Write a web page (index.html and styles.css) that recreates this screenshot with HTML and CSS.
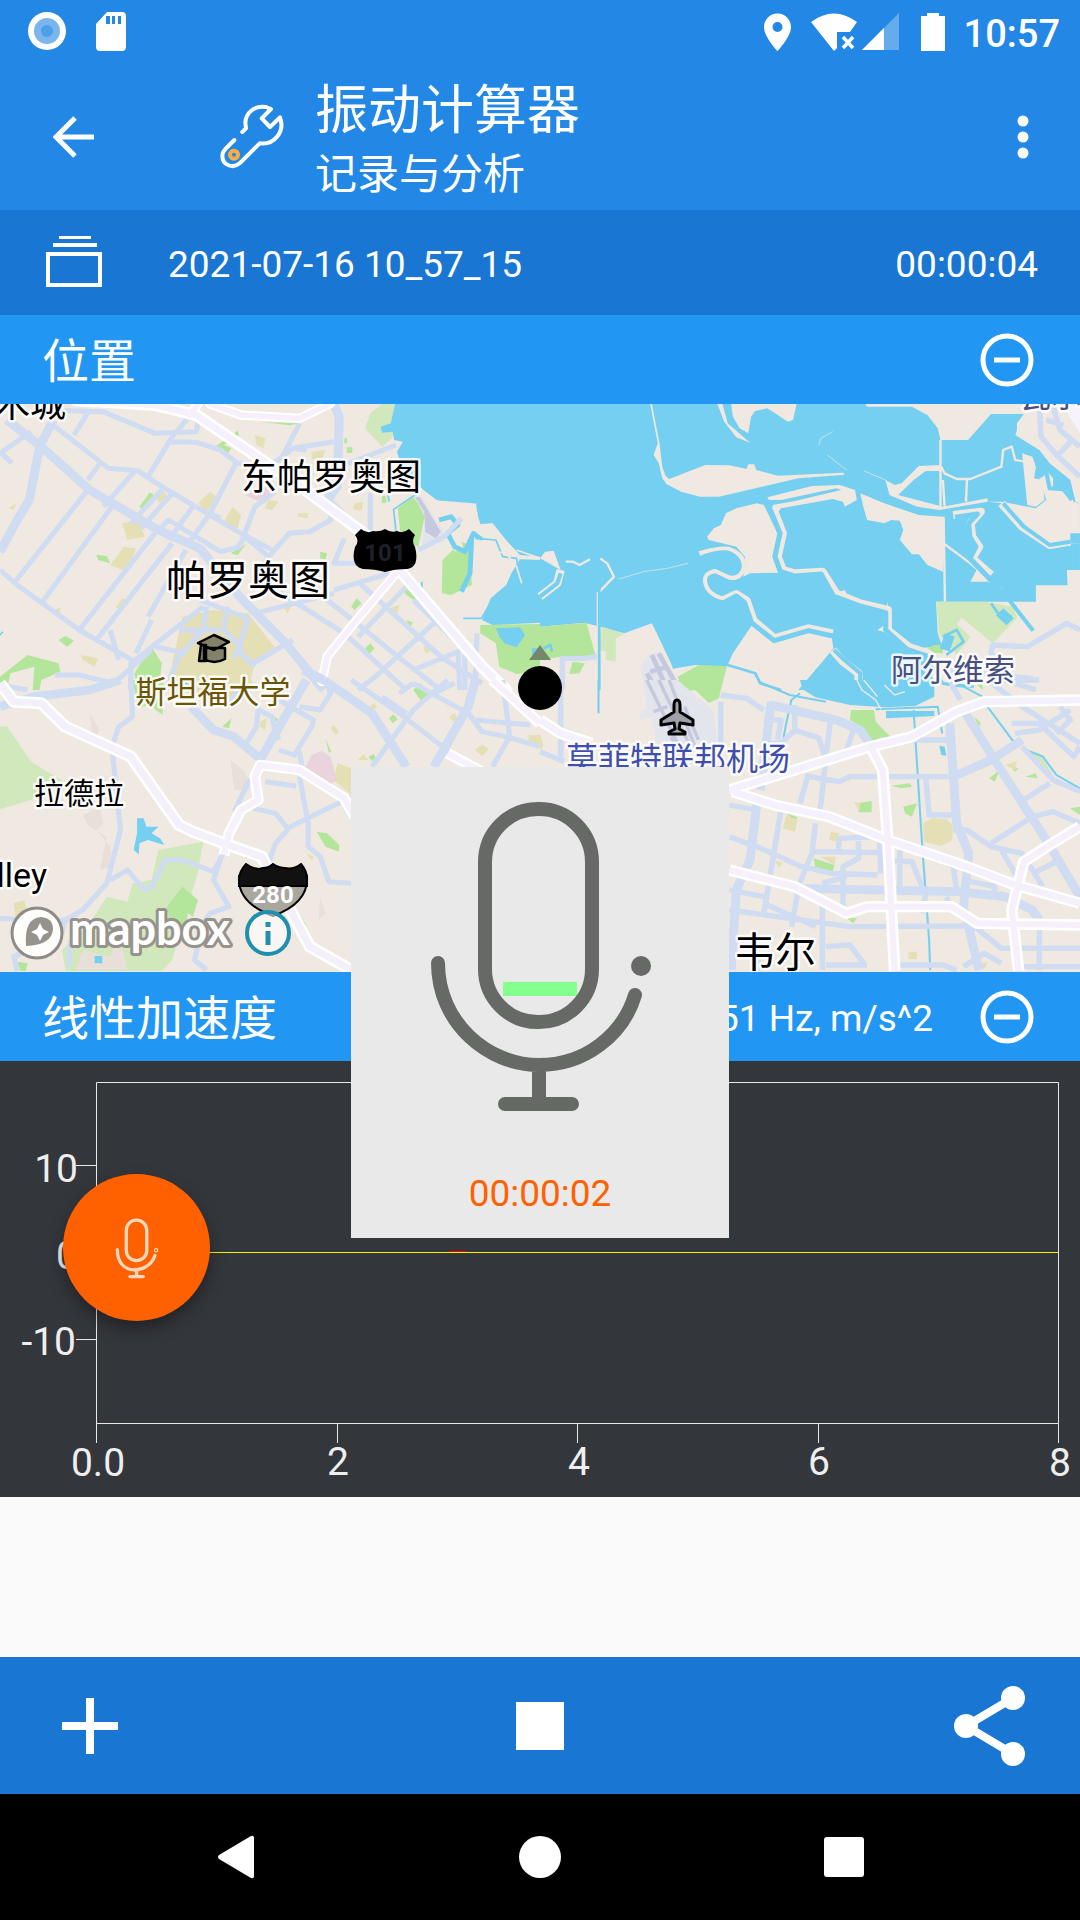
FILE: index.html
```html
<!DOCTYPE html>
<html lang="zh-CN">
<head>
<meta charset="utf-8">
<meta name="viewport" content="width=device-width, initial-scale=1">
<title>振动计算器</title>
<link rel="stylesheet" href="styles.css">
</head>
<body>
<div class="app">
  <div class="status">
    <svg class="status-left" viewBox="0 0 104 40" aria-hidden="true">
      <circle cx="19" cy="20" r="19" fill="#fff"/><circle cx="19" cy="20" r="13" fill="#7ab5ee"/><circle cx="19" cy="20" r="6" fill="#4c9fe9"/>
      <path fill="#fff" fill-rule="evenodd" d="M79 1h15q4 0 4 4v31q0 4-4 4H72q-4 0-4-4V13zM78 5v8h4V5zm6 0v8h3V5zm6 0v8h3V5z"/>
    </svg>
    <div class="status-right">
      <svg class="status-icons" viewBox="0 0 182 40" aria-hidden="true">
        <path fill="#fff" fill-rule="evenodd" d="M13.500 2.500C6 2.500 0 8.500 0 16c0 10 13.500 24 13.500 24S27 26 27 16C27 8.500 21 2.500 13.500 2.500zm0 8.500a5 5 0 1 1 0 10 5 5 0 0 1 0-10z"/>
        <path fill="#fff" d="M47 11q23-17 46 0l-7 10H73v16l-3 3z"/>
        <path d="m79 26 10 11m0-11L79 37" stroke="#fff" stroke-width="3.500"/>
        <path fill="#64acec" d="M135 2v37H98z"/><path fill="#fff" d="M120 17v22H98z"/>
        <path fill="#fff" d="M163 2h12v3h6v35h-24V5h6z"/>
      </svg>
      <span class="clock">10:57</span>
    </div>
  </div>

  <header class="toolbar">
    <button class="icon-btn back" aria-label="返回">
      <svg viewBox="0 0 42 42" width="42" height="42"><path d="M22 2 3 21l19 19M3 21h38" fill="none" stroke="#fff" stroke-width="5"/></svg>
    </button>
    <svg class="wrench" viewBox="60 310 195 195" aria-hidden="true">
      <g fill="none" stroke="#fff" stroke-width="12" stroke-linecap="round" stroke-linejoin="round">
        <path d="M127 394 138 383 136 366C138 335 165 313 198 319L213 325 185 353 210 379 240 350C256 393 222 434 179 428L119 488C99 505 67 494 67 465C67 453 75 446 82 439L103 418"/>
      </g>
      <circle cx="102" cy="462" r="12" fill="none" stroke="#ffab40" stroke-width="12"/>
    </svg>
    <div class="titles">
      <h1>振动计算器</h1>
      <p>记录与分析</p>
    </div>
    <button class="icon-btn more" aria-label="更多">
      <svg viewBox="0 0 12 44" width="12" height="44" fill="#fff"><circle cx="6" cy="6" r="5.500"/><circle cx="6" cy="22" r="5.500"/><circle cx="6" cy="38" r="5.500"/></svg>
    </button>
  </header>

  <div class="record">
    <svg viewBox="0 0 56 54" width="56" height="54" aria-hidden="true"><path d="M2 18h52v31H2zM7 9h44M13 1h32" fill="none" stroke="#fff" stroke-width="4"/></svg>
    <span class="record-name">2021-07-16 10_57_15</span>
    <time>00:00:04</time>
  </div>

  <section class="panel">
    <div class="panel-head">
      <h2>位置</h2>
      <button class="icon-btn" aria-label="收起位置"><svg viewBox="0 0 54 54" width="54" height="54" fill="none" stroke="#fff" stroke-width="5"><circle cx="27" cy="27" r="24"/><path d="M14 27h26"/></svg></button>
    </div>
    <svg class="map" viewBox="0 404 1080 568" role="img" aria-label="地图">
      <rect y="404" width="1080" height="568" fill="#efe9e1"/>

      <!-- north-west quarter -->
      <g transform="translate(0 400) scale(.34435 .33333)">
        <g fill="#b3e59b">
          <path d="M625 140 690 92 695 105 650 135 672 145 660 162zM405 320 435 277 447 285 415 330zM545 417 590 440 590 455 550 428zM280 465 310 468 320 490 285 480zM1155 325 1200 290 1235 340 1215 440 1165 420zM1285 480 1340 425 1365 435 1370 555 1310 585 1283 580zM1395 675 1568 672V815L1500 822 1450 800 1440 730 1395 700zM1170 560 1220 590 1215 612 1175 580zM1020 620 1035 595 1050 610 1030 630zM1060 745 1075 730 1088 745 1073 762zM0 830 80 765 170 790 175 815 120 840 115 870H95L100 800 30 820 20 870H0zM390 820 440 740 470 790 460 870H400zM170 720 190 708 215 722 195 740zM670 460 715 433 690 465zM930 455 950 460 945 480 930 475zM1210 850 1240 870H1215zM1000 115h8v15h-8zM1007 142h16v16h-16zM1110 285l12 5v18h-14zM760 66 870 70 840 76zM1180 660 1200 668 1190 680z"/>
        </g>
        <path fill="#d1e8bd" d="M1145 12 1140 110 1110 140 1060 85 1075 40 1110 12z"/>
        <g fill="#e5dfb5">
          <path d="M500 790 530 650 620 630 720 640 800 745 740 790 720 870 500 840zM355 370 400 360 420 410 370 420zM320 495 360 440 395 445 370 515zM740 105 770 115 765 145 745 135zM645 375 675 320 700 345 690 385zM575 310 610 275 630 290 600 335zM905 155 945 150 930 190 905 175zM1030 310 1055 305 1050 333 1025 328zM780 300 810 305 790 330 770 325zM865 340 895 340 893 355 865 350zM1130 625 1160 615 1155 640 1135 638zM1230 740 1250 735 1250 755 1235 760zM235 765 285 775 275 800 240 780zM490 98 510 100 495 120zM335 625 355 595 365 600 350 625zM825 625 845 620 835 640zM25 325 48 308 40 330zM155 630 178 622 170 643zM455 290 475 272 485 290 460 310z"/>
        </g>
        <path fill="#e9d3dc" d="M712 285 770 262 790 285 765 310zM555 700 585 695 580 718 560 715z"/>
        <path fill="#e3e3ec" d="M1205 290 1225 290 1285 390 1290 425 1225 435 1235 355z"/>
        <path fill="#c6c8dd" d="M1205 292 1220 292 1280 395 1265 415 1235 395 1232 335z"/>
        <g fill="#75cff0">
          <path d="M1147 12H1572V470L1510 465 1465 415 1430 370 1395 372 1385 340 1383 310 1340 318 1300 318 1265 298 1230 270 1170 210 1153 155 1170 125 1145 120 1140 95 1110 98 1105 80 1135 70z"/>
          <path d="M1572 480 1510 478 1485 520 1470 555 1425 595 1400 660 1430 675 1572 668zM1440 685 1510 682 1525 705 1500 742 1465 730 1450 710zM1545 745h20v20h-20z"/>
        </g>
        <path fill="#efe9e1" d="M1255 300 1375 310 1388 340 1378 375 1340 350 1300 345 1275 340zM1300 385 1330 390 1345 440 1320 455 1315 425zM1395 380 1430 370 1465 415 1470 450 1430 410z"/>
        <g fill="none" stroke="#75cff0" stroke-linejoin="round">
          <path stroke-width="5" d="M1150 395 1143 328 1215 278M1130 305 1120 240M0 705 8 695M1345 655 1398 655 1430 600M1380 415 1440 420 1460 470 1500 475 1510 545M1250 595 1225 565 1225 545"/>
          <path stroke-width="14" d="M1275 360 1310 350 1330 375 1300 400 1320 440 1350 455 1375 400 1400 420M1370 410 1365 520 1340 575"/>
        </g>
        <g fill="none" stroke="#efe9e1" stroke-width="5"><path d="M1390 420 1440 455 1470 460 1500 500 1515 550M1500 450 1568 475"/></g>
        <g fill="none" stroke="#cfdcf2" stroke-linejoin="round">
          <path stroke-width="26" d="M20 60 120 140 260 270 460 390 580 445 700 595 830 730 940 870M155 60 115 140 85 300 50 360 0 455M970 12 985 50 980 260 950 300 990 340"/>
          <path stroke-width="15" d="M130 30 300 35 450 100 570 95 575 65M215 105 260 30M0 160 90 95M0 155 35 190M160 80 315 205 400 212 470 260 700 400 800 455M495 125 570 127 640 150 690 190 790 195 850 145 970 125M550 50 500 110 430 230M685 190 610 340 540 440M610 340 640 355M290 190 255 240M820 170 870 70M850 145 890 150M255 270 40 550M325 320 300 355 120 610M450 400 230 690M500 430 280 720M540 450 430 650M390 215 300 320M470 270 380 370M500 280 410 385M560 320 490 420M470 380 490 360 640 455 700 440M0 510 50 555 230 690 350 760 400 790M800 275 740 320 700 430 690 440M700 400 780 470 840 400 900 395 960 360 965 310M780 470 740 530 1000 700 1180 870M1000 415 970 490 1045 490M970 570 1130 520M740 640 970 580M600 460 620 490M590 620 380 790 380 870M600 620 590 690 520 770 480 870M660 620 650 690 700 740 675 775M580 600 720 655 690 750 740 800M1045 550 1280 770 1400 850M950 600 1030 665 1180 790 1280 870M1200 600 1340 740M1270 660 1090 830 1040 870M1180 560 1040 710M160 825 230 825 330 850 440 750M320 690 345 780M0 855 80 870M440 660 395 760M1215 450 1290 410 1340 355M1075 280 1075 390M1150 135 1000 195M1200 810 1330 755 1335 870M1385 700 1380 870M1350 750 1350 870M735 790 850 720M520 690 640 690M450 740 540 760"/>
        </g>
        <g fill="none" stroke-linejoin="round" stroke-linecap="round">
          <path stroke="#fff" stroke-width="36" d="M220 0 450 15 570 45 860 250 1050 395 1160 510 1400 800 1470 870"/>
          <path stroke="#fff" stroke-width="28" d="M610 12 700 45 870 55 960 10M1150 520 1020 680 950 770 935 845M550 45 575 12M0 865 10 870"/>
          <path stroke="#f5f1fc" stroke-width="20" d="M220 0 450 15 570 45 860 250 1050 395 1160 510 1400 800 1470 870"/>
          <path stroke="#f7effa" stroke-width="16" d="M610 12 700 45 870 55 960 10M1150 520 1020 680 950 770 935 845M550 45 575 12"/>
        </g>
      </g>

      <!-- north-east quarter -->
      <g transform="translate(540 400) scale(.34435 .33333)">
        <path fill="#75cff0" d="M0 12H945L950 20H1080L1125 45 1155 85 1163 120H1243L1310 42H1405L1385 70V90L1370 140 1380 105 1450 150 1480 190 1540 240 1555 305 1568 310V510H1530L1532 556H1440V605H1150L1155 700 1168 740 1080 745 1130 770 1145 870H750L820 785 852 745 845 700 780 690 680 720 618 672 560 760 545 795 470 790 385 800 360 745 325 670 245 700 130 668 0 680z"/>
        <path fill="#b3e59b" d="M0 680 135 668 162 768 60 770 0 780zM95 785 130 790 115 820 85 822zM400 830 470 790 543 798 525 870H415zM1125 745 1145 735 1170 735 1170 760 1145 758zM1265 850h20v20z"/>
        <path fill="#d1e8bd" d="M180 680 245 702 220 715V785L190 780 192 755 172 750zM1150 605H1290L1375 620 1385 655 1315 730 1225 653 1210 672 1250 710 1210 765 1160 705z"/>
        <g fill="#efe9e1">
          <path d="M375 237 480 195 550 196 600 207 605 193 622 193 628 210 690 227 880 218 885 224 750 235 520 290 465 290 410 275 368 253 355 235 345 190 330 165 342 130 320 12 325 12 347 130 355 200 365 228z"/>
          <path d="M555 12H745L735 60 720 65 660 25 625 33 613 50 605 100 580 85 560 50zM515 12H530L545 70 610 128 570 112 535 65z"/>
          <path d="M485 410 505 385 525 375 540 340 570 325 630 310 650 315 690 400V440L680 475 700 518 610 520 590 530 597 500 595 470 570 440 490 420z"/>
          <path d="M660 292 790 258 870 255 915 270 920 300 885 320 880 305 850 297 700 325 685 345 676 315 740 303 875 270 860 265 700 300 665 300z"/>
          <path d="M930 280 1000 310 1100 345 1172 350 1170 515 1125 495 1100 463H1080L1045 420 1055 390 1045 362 1020 360 1000 370 950 360 940 325z"/>
          <path d="M1400 160 1430 170 1440 200 1435 235 1460 240 1465 300 1440 320 1415 315z"/>
          <path d="M1300 305 1340 305 1440 325 1470 300 1450 230 1470 210 1490 235 1490 265 1530 270 1550 305 1568 310V430L1480 432 1400 370 1345 310z"/>
          <path d="M1003 240 1030 255 1050 250 1100 198 1165 195V213L1120 213 1085 240 1040 285 1170 320 1300 295V305L1160 330 1095 320 1015 285zM1250 545 1270 505 1290 525 1325 560 1300 545zM15 455 40 452 60 510 0 475zM980 690 1005 672V620L1010 605V700zM860 580 885 570 890 580z"/>
        </g>
        <g fill="none" stroke="#efe9e1" stroke-linejoin="round">
          <path stroke-width="7" d="M1163 120V320M1172 350 1176 605M1165 200 1175 220 1210 237 1250 237 1340 200 1345 150 1370 140 1380 180 1410 185M1240 237 1237 305M1170 240 1175 320M1172 430 1250 490 1290 525 1340 570M75 485 95 485 115 495 145 478M175 475 195 490 215 530 168 580V680"/>
          <path stroke-width="2" d="M230 537 300 515 370 505 430 490M810 135 815 115 850 95M835 165 890 210M940 212 1003 240"/>
          <path stroke-width="24" d="M465 465C490 455 530 450 545 452C575 462 588 480 586 502C580 530 560 532 545 524L510 507C480 512 472 525 473 545C478 580 505 595 530 602L570 582 600 602 620 662 680 715 780 685 850 700M675 320 705 400 690 470 705 510 740 520 820 515 860 580 930 610 1010 630 1010 690 1070 740 1125 760M1200 345 1280 335 1250 370 1255 410 1275 440 1255 475 1310 525M60 510 50 550 0 590M850 750 880 785 925 820V870M1340 310 1400 380 1480 435 1540 425"/>
        </g>
        <g fill="none" stroke="#75cff0" stroke-linejoin="round">
          <path stroke-width="15" d="M462 478C490 462 530 456 545 459C570 468 581 485 578 502C574 520 560 522 548 517L510 499C472 506 464 525 466 547C472 585 502 602 532 609L570 588 594 608 614 668 680 722 780 692 850 708M665 320 697 400 682 470 698 514 740 528 816 522 852 588 930 618 1004 638 1004 690 1066 748 1125 768M1205 352 1270 342 1245 370 1248 410 1266 440 1248 475 1300 530 1350 590"/>
          <path stroke-width="12" d="M1340 570 1432 692M60 520 50 550 0 590M854 750 884 780 930 820V870M1345 310 1405 380 1480 435 1540 425M1450 230 1470 215 1480 265 1520 268 1545 300"/>
          <path stroke-width="8" d="M172 540V870M385 802 455 790 545 795 625 820 640 850 700 870M370 680 365 750M1310 610 1330 640 1370 650M1170 710 1210 690 1230 725 1180 765M1120 770 1170 850 1260 860M10 745 30 735 35 755"/>
          <path stroke-width="30" d="M1175 750 1190 705M1335 635 1365 665M1540 415H1568"/>
        </g>
        <path fill="#e3e5ec" d="M290 800 320 760 350 755 410 870H310z"/>
        <path fill="none" stroke="#c6c9dd" stroke-width="14" d="M325 765 370 870M345 760 405 870M310 820 340 870M320 815 370 800"/>
        <g fill="none" stroke="#cfdcf2" stroke-width="16" stroke-linejoin="round">
          <path d="M65 870V775H130L165 770M1568 690 1530 670 1415 740 1315 735 1310 760 1350 800M1450 20 1455 110 1500 165 1568 230M1470 60 1520 75M1490 20 1510 90 1568 140M1505 165 1545 120M1200 780V870M1270 820 1430 835M1350 840 1440 870"/>
        </g>
        <path d="M1520 20 1568 100V12z" fill="#f6f3fc"/>
      </g>

      <!-- south-west quarter -->
      <g transform="translate(0 680) scale(.34435 .33333)">
        <g fill="#d1e8bd"><path d="M0 140 20 138 90 245 185 305 90 360 0 388zM460 510 590 485 575 575 540 700 500 840 470 873H190L180 810 260 730 310 650 370 665 385 610 440 600z"/></g>
        <path fill="#e7dfd8" d="M240 405 290 380 300 430 280 450 320 500 330 560 290 570 310 470 260 440zM670 240 715 280 725 330 680 330zM930 650 945 700 925 720zM260 100 290 150 270 180zM345 760 370 870H220L240 810 320 830z"/>
        <g fill="#b3e59b"><path d="M485 680 530 620 575 660 560 710 545 700 540 750 495 740zM385 0H475L472 105 435 75 400 85zM645 140 672 115 665 145zM1200 30 1220 10 1250 40 1225 65zM1130 115 1142 103 1155 118 1140 130zM945 175 962 215 955 218zM920 455 950 460 985 495V515L945 500zM845 685 860 690 890 735 870 735zM1070 230 1085 223 1092 235 1080 243zM50 845 80 850 75 873H60zM795 110 808 118 798 130z"/></g>
        <path fill="#e5dfb5" d="M490 0H730L740 20 700 60 650 50H490zM980 250 1020 265V345L985 315 970 300zM755 125 775 115 770 150 755 140zM960 145 970 135 985 155 975 165zM1380 210 1400 193 1420 208 1400 228zM1040 240 1055 223 1070 240zM1070 85 1085 70 1095 80 1080 95zM1305 110 1320 100 1330 115 1315 125zM1535 165H1568V195L1535 185zM890 520 912 530 905 542zM40 670 70 660 80 700 45 710z"/>
        <path fill="#e9d3dc" d="M885 265 905 225 935 213 960 230 978 300 955 318 910 295z"/>
        <path fill="#75cff0" d="M398 415H417L425 440H460L440 460 465 475 477 495 430 480 405 490 403 523 388 510 398 460zM275 828H297V850H275zM535 0 550 15 540 20z"/>
        <g fill="none" stroke="#cfdcf2" stroke-linejoin="round">
          <path stroke-width="26" d="M0 80 100 50 260 30 350 0M890 0 755 240M940 0 1080 100 1180 260M940 0 880 -30M1260 260 1360 80 1380 0M555 80 620 150 680 170 760 240"/>
          <path stroke-width="15" d="M380 0 385 110 345 140 325 200 350 450 310 610 240 690 190 720 180 760 40 830 50 873M320 600 370 570 420 630 440 620 480 540 530 540 620 575 660 500M640 540 620 600 665 680 610 700 590 730M590 730 565 840 600 870M0 715 80 720 200 720M205 780 200 860M750 80 745 140 715 190M750 90 790 110 800 160 810 180M810 60 910 120 905 140 855 225 810 210M870 80 930 90 960 40 950 10M870 215 880 280M770 305 860 318M680 395 720 310 740 280M735 385 800 400 835 445 1020 350M870 290 895 430V500L930 530 955 605 1020 610M835 450 800 490 780 550M1080 260 1200 90 1300 0M1020 0 1160 100 1310 220M1110 50 1180 100M1200 10 1360 100 1400 155 1470 170 1568 200M1380 120 1540 135M1430 260 1480 170 1460 0M1160 40 1200 10M1260 40 1320 10M700 20 660 80"/>
        </g>
        <g fill="none" stroke-linejoin="round">
          <path stroke="#fff" stroke-width="36" d="M0 10 40 65 120 70 190 140 380 230 520 435 560 455 650 490 760 530 900 800 1020 870"/>
          <path stroke="#fff" stroke-width="32" d="M650 525 665 460 700 390 750 360 740 290 755 255 870 270 1000 355 1030 410M1300 220 1400 275M1430 0 1568 130"/>
          <path stroke="#f3f0fa" stroke-width="21" d="M0 10 40 65 120 70 190 140 380 230 520 435 560 455 650 490 760 530 900 800 1020 870"/>
          <path stroke="#f7f1fb" stroke-width="18" d="M650 525 665 460 700 390 750 360 740 290 755 255 870 270 1000 355 1030 410M1300 220 1400 275M1430 0 1568 130"/>
        </g>
      </g>

      <!-- south-east quarter -->
      <g transform="translate(540 680) scale(.34435 .33333)">
        <path fill="#b3e59b" d="M400 0H530L520 55 490 68 450 30 410 35zM903 90 970 90 975 125 1018 170 960 185 935 140 900 120zM1020 317 1075 310 1080 320 1050 325zM925 370 963 363V397H925zM1055 380 1095 370 1080 410 1060 400zM715 400 748 412 740 422zM795 535 855 555 850 573 800 570zM890 715 920 713 910 730zM1305 295 1335 270 1320 305zM1370 265 1390 265 1380 275zM1410 290 1440 280 1445 295zM1540 385 1568 380V405zM1260 108 1280 130 1275 142z"/>
        <path fill="#d1e8bd" d="M1400 205 1450 220 1490 285 1440 255z"/>
        <path fill="#e5dfb5" d="M1112 430 1140 415 1180 418 1198 435V480L1165 498 1115 485zM715 405 748 420 740 455 705 445zM845 455 868 460 860 485 840 480zM815 530 860 530 855 555zM1350 255 1385 243 1380 270zM912 365 930 370 928 395zM1070 815h25v22h-25zM1275 855 1300 845 1290 867zM680 540 705 548 695 563zM0 160 10 200 0 210z"/>
        <path fill="#e3e5ec" d="M290 100 310 85 300 0H400L505 95 515 190 340 190 325 110 290 120z"/>
        <path fill="none" stroke="#c6c9dd" stroke-width="10" d="M310 0 400 190M345 0 430 185M375 0 450 200M420 80 460 180M330 95 370 80M380 170 430 270"/>
        <path fill="#75cff0" d="M755 0H1145V50L1090 78 1000 82 900 75 800 52 762 28zM1005 93H1145V108L1005 115zM1160 197 1175 200 1180 227 1165 225z"/>
        <g fill="none" stroke="#75cff0" stroke-width="6"><path d="M170 0V100M635 5 725 45 830 65M755 40 730 60 715 130 705 185M1085 90 1110 500 1130 780 1133 870M975 88 1155 80 1168 160M1170 12 1230 20 1285 50 1260 90M1285 60 1375 185M1400 205 1460 230 1500 285 1568 325"/></g>
        <g fill="none" stroke="#efe9e1" stroke-width="4"><path d="M920 0 935 30 975 60 990 88M940 0 980 50M1000 15 1030 45 1060 35"/></g>
        <g fill="none" stroke="#cfdcf2" stroke-linejoin="round">
          <path stroke-width="26" d="M640 330 670 75 860 120 930 150 960 195M630 370 610 540 570 630 555 870M1230 90 1320 240 1470 480 1568 650M1190 130 1210 430 1245 520 1230 680 1275 870M1200 290 1310 240 1400 180M750 625 1210 635 1350 650 1430 690 1450 720"/>
          <path stroke-width="16" d="M525 45 600 55 650 90M650 120 700 120 690 180M740 75 740 150 700 190 650 190M740 150 810 175 830 240 810 420M845 110 830 230M890 210 910 150M700 390 650 700M550 375 630 390M550 470 630 500 760 560 850 580 980 585M780 280 755 370M780 290 870 305 900 290 1200 290M985 180H1200M1120 290 1130 405H1200M800 430 790 520 750 620M790 515 990 518M865 515 870 475 980 470M925 470 925 535 880 560V680M820 610 890 590M985 460 990 580M1000 540 1080 545 1110 620M1045 510 1045 630M750 630 730 740M820 660V870M650 670 800 740M550 630 650 650M550 690 900 740 1250 738M550 800 620 790 640 870M830 800 900 795 940 850M830 855H950M1040 855 1170 855 1210 870M750 640 720 610M1300 0 1400 80 1568 190M1370 130 1450 130 1550 230 1568 200M1380 160 1450 150 1540 90M1350 210 1330 230M1400 200 1490 300 1568 335M1480 310 1390 370M1568 430 1490 395 1430 410 1310 490M1200 450 1240 450 1310 500 1400 520 1460 620M1340 510 1390 600M1430 580 1510 540M1230 600 1320 620 1320 650M1250 730 1340 805 1568 805M1230 860 1290 820 1340 850M1400 860H1568M1450 720V870M1180 650 1200 700M1120 640 1110 700M1120 520 1200 560 1210 630M1190 0 1220 60M1300 0H1450M1510 80 1540 120 1500 160M60 0V240M0 215 70 245M525 65V190"/>
        </g>
        <g fill="none" stroke-linejoin="round">
          <path stroke="#fff" stroke-width="34" d="M550 330 960 200 1080 170 1210 95 1290 65 1568 60M560 335 680 375 840 410 1010 480 1240 560 1380 615 1568 670M960 200 995 270 1010 480 1020 680 1030 873M0 120 60 160 150 190M550 570 740 620 890 700 950 680 1195 680 1270 730 1568 735M1568 440 1480 495 1405 545 1370 690 1390 873"/>
          <path stroke="#f5f1fc" stroke-width="20" d="M550 330 960 200 1080 170 1210 95 1290 65 1568 60M560 335 680 375 840 410 1010 480 1240 560 1380 615 1568 670M0 120 60 160 150 190"/>
          <path stroke="#f7effa" stroke-width="18" d="M960 200 995 270 1010 480 1020 680 1030 873M550 570 740 620 890 700 950 680 1195 680 1270 730 1568 735M1568 440 1480 495 1405 545 1370 690 1390 873"/>
        </g>
      </g>

      <!-- road shields and place symbols -->
      <path d="M361 529q6 5 12 2 7 1 12-2 6 4 12 2 6 3 12-2l6 6q-4 6 0 12 5 20-8 22-12 0-22 3-10-3-22-3-13-3-8-22 5-6 0-12z"/>
      <g stroke="#000" stroke-width="2">
        <path fill="#aaa79f" d="M239 876q-2 27 34 40 36-13 34-40z"/>
        <path fill="#111" d="M239 886v-7q0-7 7-15 10 7 17 4 6 0 10-4 6 4 12 4 8 2 16-4 6 7 6 15v7z"/>
      </g>
      <g stroke="#000" stroke-width="2.500" stroke-linejoin="round" fill="#84816a">
        <path d="M204 648v11q10 6 21 0v-11zM198 643l16-8 15 7-15 8zM201 645h5v16h-7z"/>
      </g>
      <path fill="#a0a0aa" stroke="#000" stroke-width="3" stroke-linejoin="round" d="M677 700q3 0 3 5v7l13 8v5l-13-2-1 6 6 3v2h-16v-2l6-3-1-6-13 2v-5l13-8v-7q0-5 3-5z"/>

      <g class="place" text-anchor="middle">
        <text x="30" y="417" font-size="36">木城</text>
        <text x="331" y="490" font-size="36">东帕罗奥图</text>
        <text x="248" y="595" font-size="41">帕罗奥图</text>
        <text x="79" y="804" font-size="30">拉德拉</text>
        <text x="775" y="967" font-size="41">韦尔</text>
        <text x="47" y="887" font-size="34" text-anchor="end">lley</text>
        <text class="campus" x="213" y="703" font-size="31">斯坦福大学</text>
        <text class="town" x="953" y="681" font-size="31">阿尔维索</text>
        <text class="town" x="1051" y="407" font-size="31">瓦尔</text>
        <text class="airport" x="678" y="770" font-size="32">莫菲特联邦机场</text>
      </g>
      <g class="shield" text-anchor="middle">
        <text x="385" y="561" font-size="24" fill="#20202c">101</text>
        <text x="273" y="903" font-size="24" fill="#fff">280</text>
      </g>

      <path d="m540 645 11 15h-22z" fill="#72896a"/>
      <circle cx="540" cy="688" r="22"/>

      <circle cx="37" cy="933" r="25" fill="#fdfdfb" stroke="#8f8b86" stroke-width="3"/>
      <path fill="#96928c" d="M26 946q-2-28 15-29 12 1 12 12-1 16-27 17z"/>
      <path fill="#fff" d="m40 923 3 6 6 3-6 3-3 6-3-6-6-3 6-3z"/>
      <text class="logo" x="70" y="945" font-size="45">mapbox</text>
      <circle cx="268" cy="933" r="21" fill="#fff" fill-opacity=".6" stroke="#1f8fb0" stroke-width="4"/>
      <path d="M268 922v5M268 931v14" stroke="#1f8fb0" stroke-width="5"/>
    </svg>
  </section>

  <section class="panel">
    <div class="panel-head">
      <h2>线性加速度</h2>
      <span class="rate">51 Hz, m/s^2</span>
      <button class="icon-btn" aria-label="收起线性加速度"><svg viewBox="0 0 54 54" width="54" height="54" fill="none" stroke="#fff" stroke-width="5"><circle cx="27" cy="27" r="24"/><path d="M14 27h26"/></svg></button>
    </div>
    <svg class="chart" viewBox="0 0 1080 436" role="img" aria-label="线性加速度图表">
      <rect width="1080" height="436" fill="#33363b"/>
      <path d="M96.500 382V21.500h962V382M76 104.500h20M76 278.500h20M76 191.500h20M96 362.500h962M337.500 362v20M577.500 362v20M818.500 362v20" fill="none" stroke="#e8e8e8"/>
      <path d="M97 191.500h961" stroke="#f5f500"/>
      <path d="M449 190.500h18" stroke="#f00000"/>
      <g class="axis">
        <g text-anchor="end"><text x="78" y="121">10</text><text x="78" y="208">0</text><text x="76" y="294">-10</text></g>
        <g text-anchor="middle"><text x="98" y="415">0.0</text><text x="338" y="414">2</text><text x="579" y="414">4</text><text x="819" y="414">6</text><text x="1060" y="415">8</text></g>
      </g>
    </svg>
  </section>

  <div class="spacer"></div>

  <div class="actions">
    <button class="icon-btn" aria-label="添加"><svg viewBox="0 0 56 56" width="56" height="56"><path d="M28 0v56M0 28h56" stroke="#fff" stroke-width="8"/></svg></button>
    <button class="icon-btn" aria-label="停止"><svg viewBox="0 0 48 48" width="48" height="48"><path fill="#fff" d="M0 0h48v48H0z"/></svg></button>
    <button class="icon-btn share" aria-label="分享"><svg viewBox="0 0 72 80" width="72" height="80" fill="#fff"><path d="M59 12 12 40l47 28" fill="none" stroke="#fff" stroke-width="8"/><circle cx="59" cy="12" r="12"/><circle cx="12" cy="40" r="12"/><circle cx="59" cy="68" r="12"/></svg></button>
  </div>

  <nav class="navbar">
    <button class="icon-btn" aria-label="后退"><svg viewBox="0 0 44 44" width="44" height="44"><path fill="#fff" d="M37 1q3-1 3 2v38q0 3-3 2L5 24q-2-2 0-4z"/></svg></button>
    <button class="icon-btn" aria-label="主屏幕"><svg viewBox="0 0 44 44" width="44" height="44"><circle cx="22" cy="22" r="21" fill="#fff"/></svg></button>
    <button class="icon-btn" aria-label="最近任务"><svg viewBox="0 0 44 44" width="44" height="44"><rect x="2" y="2" width="40" height="40" rx="3" fill="#fff"/></svg></button>
  </nav>

  <button class="fab" aria-label="录音">
    <svg viewBox="86 35 230 320" width="44" height="62" fill="none" stroke="#ffd8bd" stroke-width="17" stroke-linecap="round"><rect x="145" y="49" width="107" height="212" rx="53"/><path d="M98 203c0 144 165 130 197 31M199 308v36M164 344h70"/><circle cx="301" cy="207" r="3"/></svg>
  </button>

  <div class="recorder" role="dialog" aria-label="录音">
    <svg viewBox="0 0 378 371" class="recorder-mic" aria-hidden="true">
      <path fill="#85ff8d" d="M152 215h74v14h-74z"/>
      <g fill="none" stroke="#676967" stroke-width="14" stroke-linecap="round">
        <rect x="134" y="42" width="107" height="213" rx="53"/>
        <path d="M87 196c0 60 50 102 101 102 46 0 84-30 96-70M188 298v39M154 337h67"/>
      </g>
      <circle cx="290" cy="199" r="10" fill="#676967"/>
    </svg>
    <time>00:00:02</time>
  </div>
</div>
</body>
</html>
```
FILE: styles.css
```css
* { box-sizing: border-box; }

body {
  margin: 0;
  background: #fafafa;
  color: #fff;
  font-family: Roboto, "Noto Sans CJK SC", sans-serif;
}

h1, h2, p { margin: 0; font-weight: 400; }

svg { display: block; flex: none; }

.app {
  position: relative;
  display: flex;
  flex-direction: column;
  min-height: 100vh;
}

.icon-btn {
  display: grid;
  place-items: center;
  padding: 0;
  border: 0;
  background: none;
  cursor: pointer;
}

.status {
  display: flex;
  justify-content: space-between;
  align-items: flex-start;
  height: 63px;
  padding: 11px 20px 0 28px;
  background: #2388e5;
}
.status-left { width: 104px; height: 40px; }
.status-right { display: flex; gap: 18px; }
.status-icons { width: 182px; height: 40px; }
.clock { font-size: 38px; line-height: 46px; font-weight: 500; }

.toolbar {
  display: flex;
  align-items: center;
  height: 147px;
  padding: 0 51px 0 53px;
  background: #2388e5;
}
.wrench { width: 65px; height: 65px; margin-left: 125px; }
.titles { flex: 1; margin-left: 30px; padding-top: 8px; }
.titles h1 { font-size: 53px; line-height: 68px; }
.titles p { font-size: 42px; line-height: 60px; }

.record {
  display: flex;
  align-items: center;
  height: 105px;
  padding: 0 42px 0 46px;
  background: #1976d2;
  font-size: 37px;
}
.record-name { flex: 1; margin-left: 66px; }
.record-name, .record time { padding-top: 4px; }

.panel-head {
  display: flex;
  align-items: center;
  height: 89px;
  padding: 0 46px 0 42px;
  background: #2196f3;
}
.panel-head h2 { flex: 1; padding-top: 4px; font-size: 47px; line-height: 68px; }
.rate { margin-right: 47px; padding-top: 4px; font-size: 37px; }

.map, .chart { width: 100%; height: auto; }

.place text {
  paint-order: stroke;
  stroke: #fff;
  stroke-opacity: .85;
  stroke-width: 5px;
  stroke-linejoin: round;
  fill: #000;
}
.place .campus { fill: #6b5505; }
.place .town { fill: #474f7e; }
.place .airport { fill: #3f4fae; }
.shield { font-weight: 700; }
.logo {
  font-family: Lato, sans-serif;
  font-weight: 700;
  fill: #fff;
  stroke: #96928c;
  stroke-width: 6px;
  stroke-linejoin: round;
  paint-order: stroke;
}

.axis { font-size: 39px; fill: #eee; }

.spacer { flex: 1; min-height: 40px; }

.actions {
  display: grid;
  grid-template-columns: 1fr auto 1fr;
  justify-items: start;
  align-items: center;
  height: 137px;
  padding: 0 53px 0 61px;
  background: #1976d2;
}
.actions {
  padding: 0 54px;
}
.actions .icon-btn:first-child { margin-left: 8px; }
.share { justify-self: end; }

.navbar {
  display: flex;
  justify-content: center;
  align-items: center;
  gap: 260px;
  height: 126px;
  background: #000;
}

.fab {
  position: absolute;
  top: 1174px;
  left: 63px;
  display: grid;
  place-items: center;
  width: 147px;
  height: 147px;
  padding: 0;
  border: 0;
  border-radius: 50%;
  background: #ff6100;
  box-shadow: 0 8px 16px rgba(0, 0, 0, .35);
}

.recorder {
  position: absolute;
  top: 767px;
  left: 50%;
  width: 378px;
  height: 471px;
  transform: translateX(-50%);
  background: #e9e9e9;
  color: #ff6100;
  font-size: 37px;
  line-height: 44px;
  text-align: center;
}
.recorder-mic { width: 378px; height: 371px; }
.recorder time { display: block; margin-top: 34px; }
```
